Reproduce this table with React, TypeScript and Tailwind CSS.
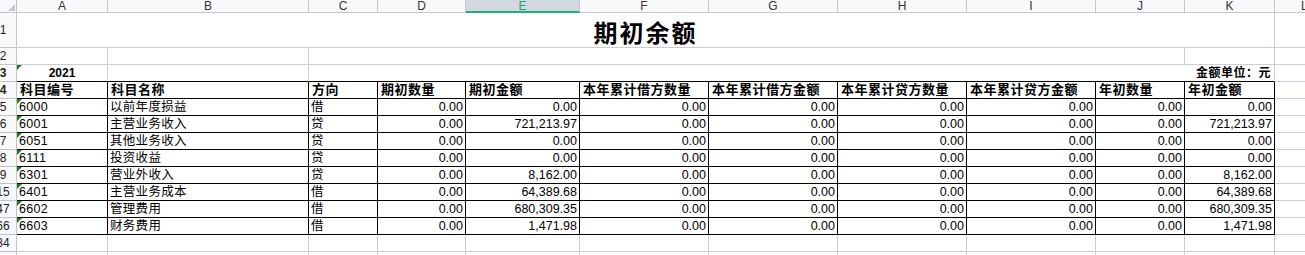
import React from 'react';

// column widths for A..K, L fills the rest
const COLS = [
  'w-[91px]',
  'w-[201px]',
  'w-[69px]',
  'w-[88px]',
  'w-[114px]',
  'w-[129px]',
  'w-[129px]',
  'w-[129px]',
  'w-[129px]',
  'w-[89px]',
  'w-[90px]',
];
const LETTERS = ['A', 'B', 'C', 'D', 'E', 'F', 'G', 'H', 'I', 'J', 'K'];

const HEADERS = [
  '科目编号',
  '科目名称',
  '方向',
  '期初数量',
  '期初金额',
  '本年累计借方数量',
  '本年累计借方金额',
  '本年累计贷方数量',
  '本年累计贷方金额',
  '年初数量',
  '年初金额',
];

const z = '0.00';
const ROWS: { n: string; cells: string[] }[] = [
  { n: '5', cells: ['6000', '以前年度损益', '借', z, z, z, z, z, z, z, z] },
  { n: '6', cells: ['6001', '主营业务收入', '贷', z, '721,213.97', z, z, z, z, z, '721,213.97'] },
  { n: '7', cells: ['6051', '其他业务收入', '贷', z, z, z, z, z, z, z, z] },
  { n: '8', cells: ['6111', '投资收益', '贷', z, z, z, z, z, z, z, z] },
  { n: '9', cells: ['6301', '营业外收入', '贷', z, '8,162.00', z, z, z, z, z, '8,162.00'] },
  { n: '15', cells: ['6401', '主营业务成本', '借', z, '64,389.68', z, z, z, z, z, '64,389.68'] },
  { n: '47', cells: ['6602', '管理费用', '借', z, '680,309.35', z, z, z, z, z, '680,309.35'] },
  { n: '66', cells: ['6603', '财务费用', '借', z, '1,471.98', z, z, z, z, z, '1,471.98'] },
];

const GRID = 'border-[#c9cdd8]';

function RowNum({ n }: { n: string }) {
  return (
    <div className="w-[17px] shrink-0 h-full overflow-hidden flex items-center bg-[#f8f9fb] border-r border-b border-[#bfc4cf] text-[12px] text-[#222]">
      <div className="w-[6px] shrink-0 flex justify-center whitespace-nowrap">{n}</div>
    </div>
  );
}

function Flag() {
  return (
    <svg className="absolute left-0 top-0" width="5" height="5" viewBox="0 0 5 5">
      <path d="M0 0H5L0 5Z" fill="#1e7b1e" />
    </svg>
  );
}

export default function App() {
  return (
    <div className="w-[1305px] h-[255px] overflow-hidden bg-white text-black font-[family-name:'Liberation_Sans','Noto_Sans_CJK_SC',sans-serif]">
      {/* column letters */}
      <div className="flex h-[13px] bg-[#f8f9fb] text-[12px] leading-[12px] text-[#333]">
        <div className="w-[17px] shrink-0 h-full border-r border-b border-[#bfc4cf] flex items-end justify-end pr-[1px] pb-[1px]">
          <svg width="7" height="7" viewBox="0 0 7 7">
            <path d="M7 0V7H0Z" fill="#c4c7cc" />
          </svg>
        </div>
        {LETTERS.map((l, i) =>
          l === 'E' ? (
            <div
              key={l}
              className={`${COLS[i]} shrink-0 h-full flex justify-center bg-[#d3d7df] border-r border-[#c4c8d2] border-b-2 border-b-[#1fb07a] text-[#1fa36e]`}
            >
              {l}
            </div>
          ) : (
            <div key={l} className={`${COLS[i]} shrink-0 h-full flex justify-center border-r border-b border-[#c4c8d2]`}>
              {l}
            </div>
          )
        )}
        <div className="flex-1 h-full border-b border-[#c4c8d2] pl-[26px] overflow-hidden">L</div>
      </div>

      {/* row 1: title */}
      <div className="flex h-[35px]">
        <RowNum n="1" />
        <div className={`w-[1258px] shrink-0 h-full border-r border-b ${GRID} flex items-center justify-center pt-[3px] text-[24px] font-bold tracking-[2px] font-[family-name:'Noto_Sans_CJK_SC',serif]`}>
          期初余额
        </div>
        <div className={`flex-1 h-full border-b ${GRID}`} />
      </div>

      {/* row 2 */}
      <div className="flex h-[17px]">
        <RowNum n="2" />
        <div className={`w-[91px] shrink-0 h-full border-r border-b ${GRID}`} />
        <div className={`w-[201px] shrink-0 h-full border-r border-b ${GRID}`} />
        <div className={`w-[876px] shrink-0 h-full border-r border-b ${GRID}`} />
        <div className={`w-[90px] shrink-0 h-full border-r border-b ${GRID}`} />
        <div className={`flex-1 h-full border-b ${GRID}`} />
      </div>

      {/* row 3 */}
      <div className="flex h-[17px] text-[12px] font-bold">
        <RowNum n="3" />
        <div className={`relative w-[91px] shrink-0 h-full border-r ${GRID} border-b border-b-black flex items-center justify-center`}>
          <Flag />
          2021
        </div>
        <div className={`w-[201px] shrink-0 h-full border-r ${GRID} border-b border-b-black`} />
        <div className={`w-[966px] shrink-0 h-full border-r ${GRID} border-b border-b-black flex items-center justify-end pr-[3px] tracking-[0.5px]`}>
          金额单位：元
        </div>
        <div className={`flex-1 h-full border-b ${GRID}`} />
      </div>

      {/* row 4: table headers */}
      <div className="flex h-[17px] text-[13px] font-bold">
        <RowNum n="4" />
        {HEADERS.map((h, i) => (
          <div
            key={h}
            className={`${COLS[i]} shrink-0 h-full border-r border-b border-black flex items-center pl-[3px] tracking-[0.5px] whitespace-nowrap overflow-hidden`}
          >
            {h}
          </div>
        ))}
        <div className={`flex-1 h-full border-b ${GRID}`} />
      </div>

      {/* data rows */}
      {ROWS.map((r) => (
        <div key={r.n} className="flex h-[17px] text-[12.5px]">
          <RowNum n={r.n} />
          {r.cells.map((c, i) => (
            <div
              key={i}
              className={`relative ${COLS[i]} shrink-0 h-full border-r border-b border-black flex items-center whitespace-nowrap ${
                i < 3 ? 'pl-[2px] tracking-[0.3px]' : 'justify-end pr-[2px]'
              }`}
            >
              {i === 0 && <Flag />}
              {c}
            </div>
          ))}
          <div className={`flex-1 h-full border-b ${GRID}`} />
        </div>
      ))}

      {/* empty rows below */}
      {['34', '35'].map((n) => (
        <div key={n} className="flex h-[17px]">
          <RowNum n={n} />
          {COLS.map((w, i) => (
            <div key={i} className={`${w} shrink-0 h-full border-r border-b ${GRID}`} />
          ))}
          <div className={`flex-1 h-full border-b ${GRID}`} />
        </div>
      ))}
    </div>
  );
}
